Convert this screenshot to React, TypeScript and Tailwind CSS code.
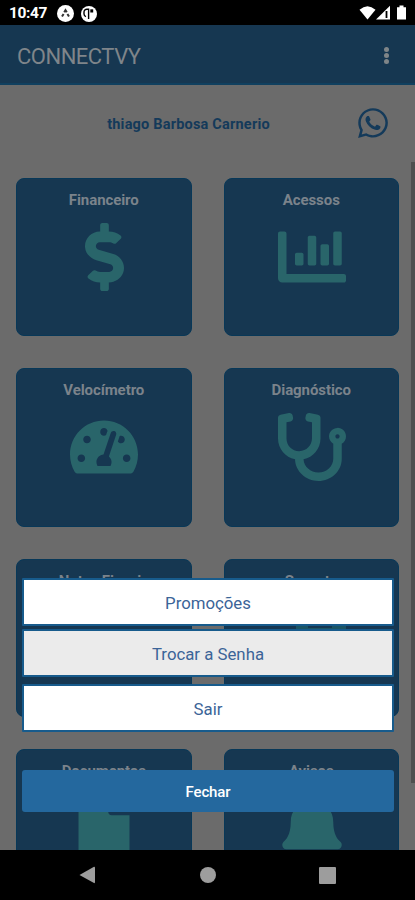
import React from 'react';
import { FaDollarSign, FaChartBar, FaTachometerAlt, FaStethoscope, FaFile, FaBell, FaWhatsapp } from 'react-icons/fa';

function Card({ title, children }: { title: string; children?: React.ReactNode }) {
  return (
    <div className="flex h-[158.5px] flex-col items-center rounded-lg border-[1.5px] border-[#083858] bg-[#163751] pt-[11px] text-[#29656a]">
      <h2 className="text-[15px] leading-[20px] font-bold tracking-[-0.08px] text-[#7b838b]">{title}</h2>
      <div className="mt-[13px] ml-px flex h-[68px] items-center justify-center">{children}</div>
    </div>
  );
}

function StatusBar() {
  return (
    <div className="flex h-[25px] shrink-0 items-center bg-black pr-[7px] pl-[9px] text-white">
      <span className="w-[38px] pt-[3px] text-[15.5px] leading-none font-bold tracking-[-0.4px]">10:47</span>
      <svg className="mt-[2px] ml-[10px]" width="17" height="17" viewBox="0 0 17 17">
        <circle cx="8.5" cy="8.5" r="8.5" fill="#fff" />
        <path d="M5 11.6 L6.6 9 M12 11.6 L10.4 9 M7.2 7.2 L8.5 5.2 L9.8 7.2" stroke="#333" strokeWidth="2" fill="none" />
      </svg>
      <svg className="mt-[2px] ml-[7px]" width="16" height="16" viewBox="0 0 16 16">
        <circle cx="8" cy="8" r="8" fill="#fff" />
        <path d="M7.6 13 V3.2 H5.8 a2.8 2.8 0 0 0 -2.8 2.8 v2 a2.8 2.8 0 0 0 2 2.6" fill="none" stroke="#000" strokeWidth="1.4" />
        <path d="M9.3 3.3 h2.9 v3.2 h-2.9z" fill="#000" />
      </svg>
      <svg className="mt-px ml-auto" width="49" height="16" viewBox="0 0 49 16">
        <path d="M0.5 4.8 Q8.5 -2.5 16.5 4.8 L8.5 14.5z" fill="#fff" />
        <path d="M17 14.5 L31 0.8 V14.5z" fill="#fff" />
        <path d="M27.5 6 v7" stroke="#000" strokeWidth="1.8" />
        <path d="M38 2.2 h2.5 V0.4 h4 v1.8 H47 V14.5 H38z" fill="#fff" />
      </svg>
    </div>
  );
}

export default function App() {
  return (
    <div className="relative flex h-[900px] w-[415px] flex-col overflow-hidden bg-[#6b6b6b] font-['Roboto',sans-serif]">
      <StatusBar />
      <header className="flex h-[60px] shrink-0 items-center justify-between border-b-2 border-[#10405f] bg-[#163751] pr-[26px] pl-[17px]">
        <h1 className="pt-[5px] text-[22px] leading-none tracking-[-0.5px] text-[#7f858a]">CONNECTVY</h1>
        <div className="flex flex-col gap-[1px] pt-[3px]">
          <i className="size-[5px] rounded-full bg-[#7f8588]" />
          <i className="size-[5px] rounded-full bg-[#7f8588]" />
          <i className="size-[5px] rounded-full bg-[#7f8588]" />
        </div>
      </header>
      <main className="flex min-h-0 flex-1 flex-col overflow-hidden">
        <div className="flex h-[92.5px] shrink-0 items-start pr-[25px] pl-[21px] text-[#143a5a]">
          <p className="flex-1 pt-[31px] text-center text-[14.5px] leading-[18px] font-bold tracking-[0.2px]">thiago Barbosa Carnerio</p>
          <FaWhatsapp className="mt-[21px]" size={34} />
        </div>
        <div className="grid shrink-0 grid-cols-2 gap-x-8 gap-y-8 px-4">
          <Card title="Financeiro"><FaDollarSign className="h-[68px] w-[39px]" preserveAspectRatio="none" /></Card>
          <Card title="Acessos"><FaChartBar size={68} /></Card>
          <Card title="Velocímetro"><FaTachometerAlt size={68} /></Card>
          <Card title="Diagnóstico"><FaStethoscope size={68} /></Card>
          <Card title="Notas Fiscais" />
          <Card title="Suporte">
            <svg width="68" height="68" viewBox="0 0 68 68">
              <path d="M18 20 h12 v4 h24 v-3 h14 v34 H18z" fill="#1b5564" />
            </svg>
          </Card>
          <Card title="Documentos"><FaFile size={68} /></Card>
          <Card title="Avisos"><FaBell size={68} /></Card>
        </div>
      </main>
      <nav className="grid h-[50px] shrink-0 grid-cols-[88px_240px_87px] items-center bg-black text-[#9d9d9d]">
        <svg className="ml-[79px]" width="17" height="18" viewBox="0 0 17 18"><path d="M0.5 9 L15 0.8 Q16 0.5 16 2 V16 Q16 17.5 15 17z" fill="currentColor" /></svg>
        <i className="ml-[112px] size-4 rounded-full bg-[#9d9d9d]" />
        <i className="-ml-[9px] size-[17px] rounded-[1px] bg-[#9d9d9d]" />
      </nav>
      <i className="absolute top-[162px] left-[411px] h-[621px] w-1 bg-[#505050]" />
      <div className="absolute top-[578px] left-[22px] flex w-[372px] flex-col text-[16.8px] text-[#3b6498]">
        <button className="h-[48px] rounded-[1px] border-2 border-[#175b8c] bg-white pt-[3px]">Promoções</button>
        <button className="mt-[3px] h-[48px] rounded-[1px] border-2 border-[#175b8c] bg-[#ebebeb] pt-[3px]">Trocar a Senha</button>
        <button className="mt-[7px] h-[48px] rounded-[1px] border-2 border-[#175b8c] bg-white pt-[4px]">Sair</button>
        <button className="mt-[38px] h-[42px] rounded-[3px] bg-[#24689e] pt-[2px] text-[15px] font-medium tracking-[-0.1px] text-white">Fechar</button>
      </div>
    </div>
  );
}
